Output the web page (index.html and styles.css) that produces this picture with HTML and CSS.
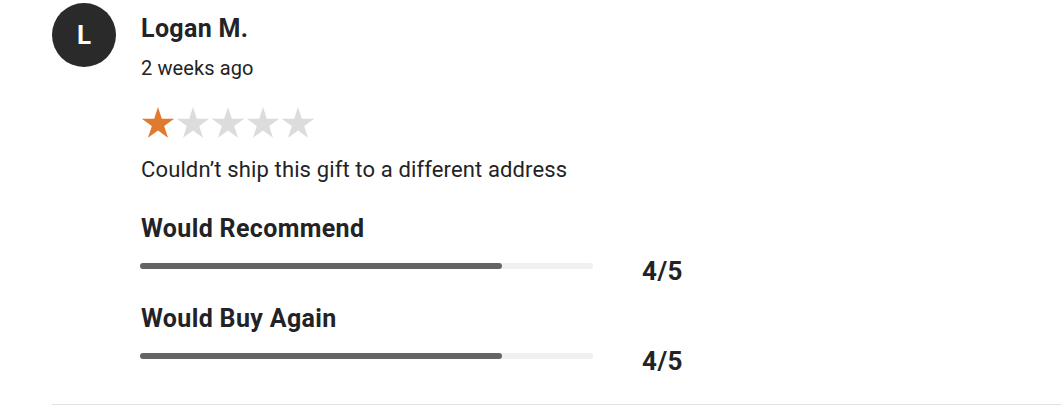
FILE: index.html
```html
<!DOCTYPE html>
<html lang="en">
<head>
<meta charset="utf-8">
<title>Review</title>
<link rel="stylesheet" href="styles.css">
</head>
<body>
<article class="review">
  <div class="avatar">L</div>
  <div class="content">
    <h3 class="name">Logan M.</h3>
    <div class="date">2 weeks ago</div>
    <div class="stars" aria-label="1 out of 5 stars">
      <svg class="star on" viewBox="0 0 34 31"><path d="M17 0L20.82 11.74L33.17 11.75L23.18 19.01L27 30.75L17 23.5L7 30.75L10.82 19.01L.83 11.75L13.18 11.74Z"/></svg>
      <svg class="star" viewBox="0 0 34 31"><path d="M17 0L20.82 11.74L33.17 11.75L23.18 19.01L27 30.75L17 23.5L7 30.75L10.82 19.01L.83 11.75L13.18 11.74Z"/></svg>
      <svg class="star" viewBox="0 0 34 31"><path d="M17 0L20.82 11.74L33.17 11.75L23.18 19.01L27 30.75L17 23.5L7 30.75L10.82 19.01L.83 11.75L13.18 11.74Z"/></svg>
      <svg class="star" viewBox="0 0 34 31"><path d="M17 0L20.82 11.74L33.17 11.75L23.18 19.01L27 30.75L17 23.5L7 30.75L10.82 19.01L.83 11.75L13.18 11.74Z"/></svg>
      <svg class="star" viewBox="0 0 34 31"><path d="M17 0L20.82 11.74L33.17 11.75L23.18 19.01L27 30.75L17 23.5L7 30.75L10.82 19.01L.83 11.75L13.18 11.74Z"/></svg>
    </div>
    <p class="text">Couldn’t ship this gift to a different address</p>
    <div class="metric">
      <div class="metric-label">Would Recommend</div>
      <div class="metric-row">
        <div class="bar"><div class="fill" style="width:80%"></div></div>
        <div class="score">4/5</div>
      </div>
    </div>
    <div class="metric">
      <div class="metric-label">Would Buy Again</div>
      <div class="metric-row">
        <div class="bar"><div class="fill" style="width:80%"></div></div>
        <div class="score">4/5</div>
      </div>
    </div>
  </div>
</article>
</body>
</html>
```
FILE: styles.css
```css
* { box-sizing: border-box; }
html, body { margin: 0; padding: 0; background: #fff; }
body {
  font-family: Roboto, "Liberation Sans", Arial, sans-serif;
  color: #222326;
}
.review {
  margin-left: 52px;
  display: flex;
  gap: 25px;
  padding-top: 3px;
  padding-bottom: 29px;
  border-bottom: 1px solid #e2e2e2;
}
.avatar {
  flex: none;
  width: 64px;
  height: 64px;
  border-radius: 50%;
  background: #2a2a2a;
  color: #fff;
  font-weight: 700;
  font-size: 26px;
  display: flex;
  align-items: center;
  justify-content: center;
}
.content { flex: 1; padding-top: 12px; }
.name {
  margin: 0;
  font-size: 25px;
  line-height: 28px;
  font-weight: 700;
  letter-spacing: 0.35px;
}
.date {
  margin-top: 14px;
  font-size: 20px;
  line-height: 22px;
  letter-spacing: 0.1px;
}
.stars {
  display: flex;
  gap: 1px;
  margin-top: 28px;
}
.star { width: 34px; height: 31px; fill: #dcdcdc; display: block; }
.star.on { fill: #e07a2f; }
.text {
  margin: 20px 0 0;
  font-size: 22px;
  line-height: 24px;
  letter-spacing: 0.13px;
}
.metric { margin-top: 33px; }
.metric + .metric { margin-top: 20px; }
.metric-label {
  font-size: 25px;
  line-height: 28px;
  font-weight: 700;
  letter-spacing: 0.35px;
}
.metric-row {
  display: flex;
  align-items: flex-start;
  margin-top: 14px;
}
.bar {
  width: 453px;
  height: 6px;
  margin-left: -1px;
  margin-top: 6px;
  border-radius: 3px;
  background: #f0f0f0;
}
.fill {
  height: 100%;
  border-radius: 3px;
  background: #646464;
}
.score {
  margin-left: 49px;
  font-size: 26px;
  line-height: 28px;
  font-weight: 700;
  letter-spacing: 0.5px;
}
```
